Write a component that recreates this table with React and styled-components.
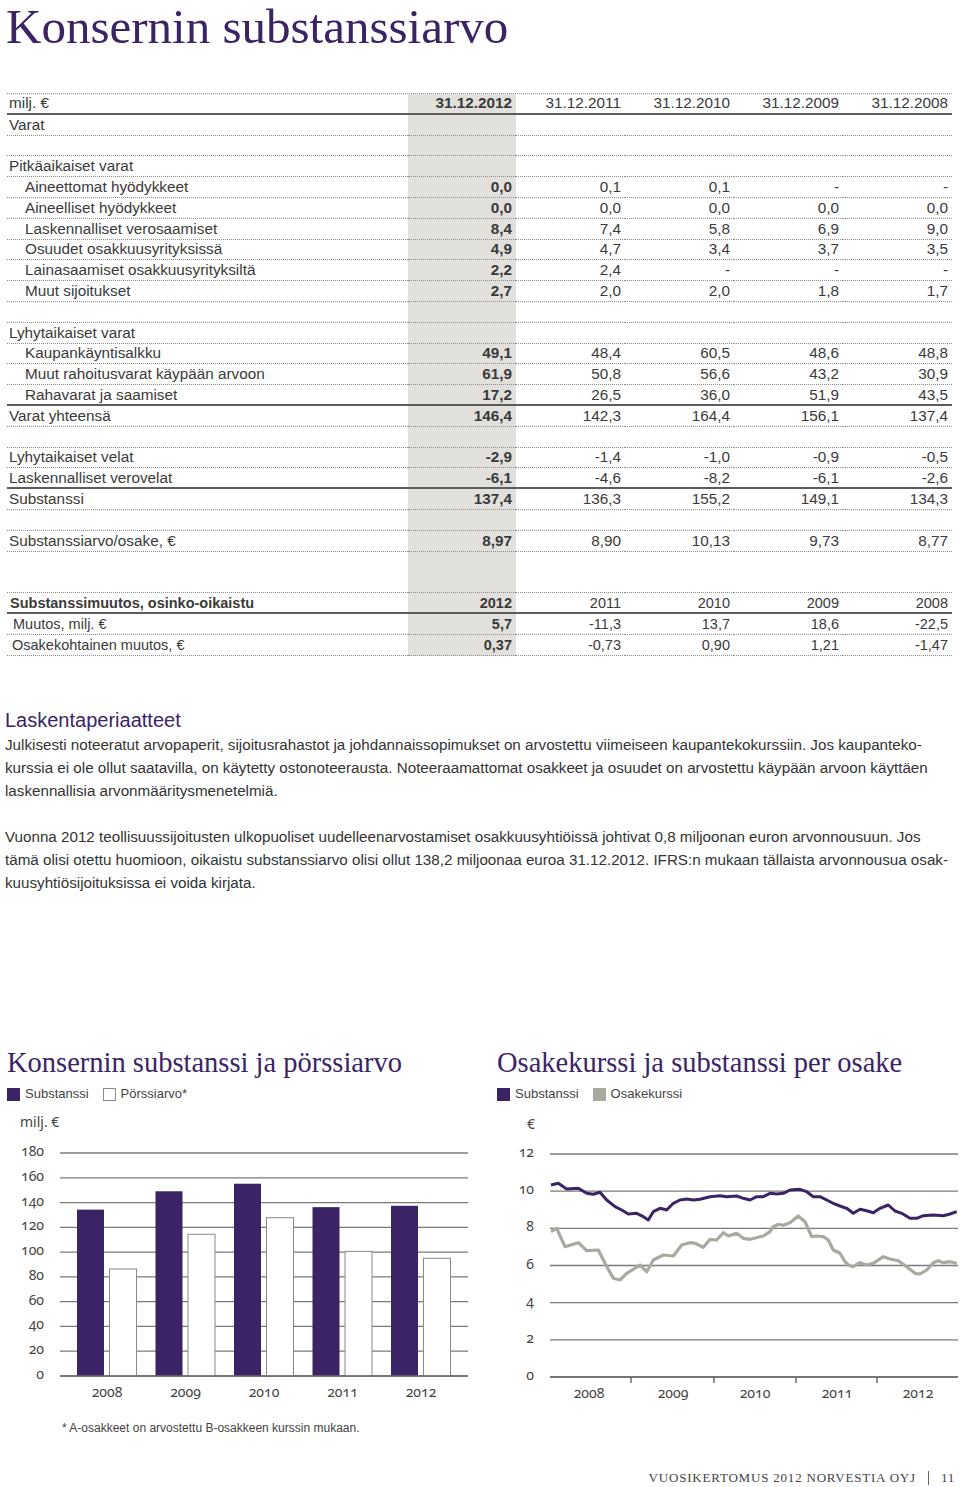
import React from "react";
import styled, { createGlobalStyle } from "styled-components";

const PURPLE = "#3b2466";
const GRAY_COL = "#e1e0dc";
const STOCK = "#a9a9a1";

const GlobalStyle = createGlobalStyle`
  html, body {
    margin: 0;
    padding: 0;
    background: #fff;
  }
  body {
    font-family: "Liberation Sans", Arial, sans-serif;
    color: #333;
  }
`;

const Page = styled.div`
  width: 960px;
  height: 1487px;
  overflow: hidden;
`;

const Title = styled.h1`
  margin: 0;
  padding-left: 6px;
  font-family: "Liberation Serif", "Times New Roman", serif;
  font-weight: normal;
  font-size: 49px;
  line-height: 54px;
  color: ${PURPLE};
`;

const Table = styled.div`
  margin: 39px 0 0 7px;
  width: 945px;
  display: grid;
  grid-template-columns: 401px 108px repeat(4, 109px);
  border-top: 1px dotted #8c8c8c;
  color: #3a3a3a;
`;

const Cell = styled.div`
  height: ${(p) => p.$h || 20.8}px;
  box-sizing: border-box;
  display: flex;
  align-items: center;
  justify-content: ${(p) => (p.$label ? "flex-start" : "flex-end")};
  padding: ${(p) => (p.$label ? `0 0 0 ${p.$pad}px` : "0 4px 0 0")};
  border-bottom: ${(p) =>
    p.$rule === "solid" ? "2px solid #5c5c5c" : "1px dotted #8c8c8c"};
  background: ${(p) => (p.$hl ? GRAY_COL : "transparent")};
  font-size: ${(p) => (p.$small ? 14.5 : 15.3)}px;
  font-weight: ${(p) => (p.$bold ? 700 : 400)};
  white-space: nowrap;
`;

const Section = styled.section`
  margin: 52px 0 0 5px;
`;

const SectionHeading = styled.h2`
  margin: 0;
  font-weight: normal;
  font-size: 20px;
  line-height: 24px;
  color: ${PURPLE};
`;

const Paragraph = styled.p`
  margin: 1.5px 0 0;
  font-size: 15.2px;
  line-height: 23px;
  white-space: nowrap;
  color: #333;

  & + & {
    margin-top: 23px;
  }
`;

const ChartsRow = styled.div`
  display: grid;
  grid-template-columns: 490px 470px;
  margin-top: 152px;
`;

const ChartColumn = styled.div`
  display: flex;
  flex-direction: column;
`;

const ChartTitle = styled.h3`
  margin: 0;
  padding-left: 7px;
  font-family: "Liberation Serif", "Times New Roman", serif;
  font-weight: normal;
  font-size: 28.5px;
  line-height: 34px;
  color: ${PURPLE};
  white-space: nowrap;
`;

const Legend = styled.div`
  display: flex;
  gap: 14px;
  margin-top: 6px;
  padding-left: 7px;
  font-size: 13px;
  line-height: 16px;
  color: #444;
`;

const LegendItem = styled.span`
  display: inline-flex;
  align-items: center;
  gap: 5px;
`;

const Swatch = styled.span`
  width: 13px;
  height: 13px;
  box-sizing: border-box;
  background: ${(p) => p.$color};
  border: ${(p) => (p.$outline ? "1px solid #8a8a8a" : "none")};
`;

const ChartSvg = styled.svg`
  display: block;
  margin-top: 3px;
`;

const AxisText = styled.text`
  font-family: "Noto Sans", "Liberation Sans", sans-serif;
  font-size: 14px;
  fill: #444;
  font-variant-numeric: oldstyle-nums;
`;

const Footnote = styled.div`
  margin-top: 15px;
  padding-left: 62px;
  font-size: 12px;
  line-height: 16px;
  color: #444;
`;

const Footer = styled.footer`
  display: flex;
  justify-content: flex-end;
  align-items: center;
  margin-top: 34px;
  padding-right: 5px;
  font-family: "Liberation Serif", "Times New Roman", serif;
  font-size: 13px;
  line-height: 16px;
  letter-spacing: 0.8px;
  text-transform: uppercase;
  color: #444;
`;

const FooterBar = styled.span`
  width: 1px;
  height: 14px;
  margin: 0 12px;
  background: #666;
`;

const dates = ["31.12.2012", "31.12.2011", "31.12.2010", "31.12.2009", "31.12.2008"];

const rows = [
  { label: "milj. €", values: dates, rule: "solid" },
  { label: "Varat" },
  {},
  { label: "Pitkäaikaiset varat" },
  { label: "Aineettomat hyödykkeet", indent: true, values: ["0,0", "0,1", "0,1", "-", "-"] },
  { label: "Aineelliset hyödykkeet", indent: true, values: ["0,0", "0,0", "0,0", "0,0", "0,0"] },
  { label: "Laskennalliset verosaamiset", indent: true, values: ["8,4", "7,4", "5,8", "6,9", "9,0"] },
  { label: "Osuudet osakkuusyrityksissä", indent: true, values: ["4,9", "4,7", "3,4", "3,7", "3,5"] },
  { label: "Lainasaamiset osakkuusyrityksiltä", indent: true, values: ["2,2", "2,4", "-", "-", "-"] },
  { label: "Muut sijoitukset", indent: true, values: ["2,7", "2,0", "2,0", "1,8", "1,7"] },
  {},
  { label: "Lyhytaikaiset varat" },
  { label: "Kaupankäyntisalkku", indent: true, values: ["49,1", "48,4", "60,5", "48,6", "48,8"] },
  { label: "Muut rahoitusvarat käypään arvoon", indent: true, values: ["61,9", "50,8", "56,6", "43,2", "30,9"] },
  { label: "Rahavarat ja saamiset", indent: true, values: ["17,2", "26,5", "36,0", "51,9", "43,5"], rule: "solid" },
  { label: "Varat yhteensä", values: ["146,4", "142,3", "164,4", "156,1", "137,4"] },
  {},
  { label: "Lyhytaikaiset velat", values: ["-2,9", "-1,4", "-1,0", "-0,9", "-0,5"] },
  { label: "Laskennalliset verovelat", values: ["-6,1", "-4,6", "-8,2", "-6,1", "-2,6"], rule: "solid" },
  { label: "Substanssi", values: ["137,4", "136,3", "155,2", "149,1", "134,3"] },
  {},
  { label: "Substanssiarvo/osake, €", values: ["8,97", "8,90", "10,13", "9,73", "8,77"] },
  { h: 41.6 },
  {
    label: "Substanssimuutos, osinko-oikaistu",
    values: ["2012", "2011", "2010", "2009", "2008"],
    rule: "solid",
    strong: true,
    small: true,
    pad: 3,
  },
  { label: "Muutos, milj. €", values: ["5,7", "-11,3", "13,7", "18,6", "-22,5"], small: true, pad: 6 },
  { label: "Osakekohtainen muutos, €", values: ["0,37", "-0,73", "0,90", "1,21", "-1,47"], small: true, pad: 5 },
];

// bar chart data (milj. €)
const years = ["2008", "2009", "2010", "2011", "2012"];
const substanssi = [134.3, 149.1, 155.2, 136.3, 137.4];
const porssiarvo = [86.4, 114.4, 127.8, 100.6, 95.0];

// line chart points, traced in chart-local pixels
const navLine = [
  [61, 80], [68.3, 78.3], [76.7, 84], [88.3, 83.3], [96.7, 88.3], [103.3, 89.3], [110, 87.3],
  [116.7, 95], [125, 101.7], [131.7, 105], [138.3, 109], [146.7, 108.3], [153.3, 111.7],
  [158.3, 115], [163.3, 106.7], [170, 103.3], [176.7, 105], [183.3, 98.3], [190, 95],
  [196.7, 94], [203.3, 95], [210, 94.3], [220, 91.7], [230, 90.7], [236.7, 91.7], [246.7, 91],
  [253.3, 93.3], [260, 95], [266.7, 91.7], [273.3, 91.7], [280, 88.3], [286.7, 89], [293.3, 88.3],
  [300, 85], [310, 84.3], [316.7, 86.7], [323.3, 91.7], [330, 91.7], [336.7, 95], [343.3, 98.3],
  [350, 101], [356.7, 103.3], [363.3, 108.3], [370, 104.3], [376.7, 105.7], [383.3, 107.7],
  [390, 103.3], [398.3, 100], [405, 106], [411.7, 108.3], [420, 113.3], [426.7, 113.3],
  [433.3, 110.7], [443.3, 110], [453.3, 110.7], [460, 109], [466.7, 106.7],
];

const priceLine = [
  [61, 126.7], [66.7, 123.3], [75, 141.7], [88.3, 137.7], [96.7, 145.7], [108.3, 145],
  [115, 158.3], [123.3, 173.3], [130, 175], [136.7, 168.3], [150, 160], [156.7, 166.7],
  [163.3, 155], [173.3, 150], [183.3, 151], [191.7, 140], [200, 137.7], [205, 138.3],
  [213.3, 142.3], [220, 134.3], [226.7, 135], [233.3, 127.7], [238.3, 131], [246.7, 128.3],
  [253.3, 133.3], [260, 134.3], [273.3, 131], [280, 126.7], [283.3, 121.7], [288.3, 119.3],
  [293.3, 120.3], [300, 117.7], [308.3, 111], [315, 116.7], [321.7, 131.7], [326.7, 131],
  [333.3, 131.7], [338.3, 135], [343.3, 145], [350, 148.3], [355, 156.7], [358.3, 160],
  [363.3, 161.7], [370, 157.7], [376.7, 160], [383.3, 158.3], [393.3, 151.7], [400, 154],
  [408.3, 155.7], [416.7, 161.7], [425, 168.3], [430, 169], [436.7, 165], [443.3, 157.7],
  [448.3, 155.7], [453.3, 157.7], [460, 156.7], [466.7, 158.3],
];

const toPath = (pts) => pts.map(([x, y], i) => `${i ? "L" : "M"}${x} ${y}`).join(" ");

function BarChart() {
  const base = 271;
  const k = 223 / 180;
  const steps = [0, 20, 40, 60, 80, 100, 120, 140, 160, 180];
  return (
    <ChartSvg width="480" height="300" viewBox="0 0 480 300">
      <AxisText x="20" y="22">milj. €</AxisText>
      {steps.map((v) => (
        <g key={v}>
          <line x1="60" x2="468" y1={base - v * k} y2={base - v * k} stroke="#7a7a7a" strokeWidth="1.3" />
          <AxisText x="44" y={base - v * k + 3} textAnchor="end">
            {v}
          </AxisText>
        </g>
      ))}
      {years.map((y, i) => {
        const x = 77 + i * 78.5;
        return (
          <g key={y}>
            <rect x={x} y={base - substanssi[i] * k} width="27" height={substanssi[i] * k} fill={PURPLE} />
            <rect
              x={x + 32.5}
              y={base - porssiarvo[i] * k}
              width="27"
              height={porssiarvo[i] * k}
              fill="#fff"
              stroke="#8a8a8a"
              strokeWidth="1"
            />
            <AxisText x={x + 30} y="292" textAnchor="middle">
              {y}
            </AxisText>
          </g>
        );
      })}
      <line x1="60" x2="468" y1={base} y2={base} stroke="#6a6a6a" strokeWidth="1.5" />
    </ChartSvg>
  );
}

function LineChart() {
  const base = 272;
  const k = 223 / 12;
  const steps = [0, 2, 4, 6, 8, 10, 12];
  const ticks = [141, 224, 306, 387];
  const labels = [99, 183, 265, 347, 428];
  return (
    <ChartSvg width="470" height="300" viewBox="0 0 470 300">
      <AxisText x="37" y="24">€</AxisText>
      {steps.map((v) => (
        <g key={v}>
          <line x1="60" x2="468" y1={base - v * k} y2={base - v * k} stroke="#7a7a7a" strokeWidth="1.3" />
          <AxisText x="44" y={base - v * k + 3} textAnchor="end">
            {v}
          </AxisText>
        </g>
      ))}
      {ticks.map((x) => (
        <line key={x} x1={x} x2={x} y1={base} y2={base + 6} stroke="#6a6a6a" strokeWidth="1.5" />
      ))}
      <line x1="60" x2="468" y1={base} y2={base} stroke="#6a6a6a" strokeWidth="1.5" />
      <path d={toPath(priceLine)} fill="none" stroke={STOCK} strokeWidth="3.2" strokeLinejoin="round" />
      <path d={toPath(navLine)} fill="none" stroke={PURPLE} strokeWidth="3" strokeLinejoin="round" />
      {years.map((y, i) => (
        <AxisText key={y} x={labels[i]} y="293" textAnchor="middle">
          {y}
        </AxisText>
      ))}
    </ChartSvg>
  );
}

export default function App() {
  return (
    <Page>
      <GlobalStyle />
      <Title>Konsernin substanssiarvo</Title>

      <Table>
        {rows.map((r, i) => (
          <React.Fragment key={i}>
            <Cell
              $label
              $pad={r.pad ?? (r.indent ? 18 : 2)}
              $rule={r.rule}
              $h={r.h}
              $bold={r.strong}
              $small={r.small}
            >
              {r.label}
            </Cell>
            {[0, 1, 2, 3, 4].map((c) => (
              <Cell key={c} $hl={c === 0} $bold={c === 0} $rule={r.rule} $h={r.h} $small={r.small}>
                {r.values ? r.values[c] : ""}
              </Cell>
            ))}
          </React.Fragment>
        ))}
      </Table>

      <Section>
        <SectionHeading>Laskentaperiaatteet</SectionHeading>
        <Paragraph>
          Julkisesti noteeratut arvopaperit, sijoitusrahastot ja johdannaissopimukset on arvostettu viimeiseen
          kaupantekokurssiin. Jos kaupanteko-
          <br />
          kurssia ei ole ollut saatavilla, on käytetty ostonoteerausta. Noteeraamattomat osakkeet ja osuudet on
          arvostettu käypään arvoon käyttäen
          <br />
          laskennallisia arvonmääritysmenetelmiä.
        </Paragraph>
        <Paragraph>
          Vuonna 2012 teollisuussijoitusten ulkopuoliset uudelleenarvostamiset osakkuusyhtiöissä johtivat 0,8
          miljoonan euron arvonnousuun. Jos
          <br />
          tämä olisi otettu huomioon, oikaistu substanssiarvo olisi ollut 138,2 miljoonaa euroa 31.12.2012. IFRS:n
          mukaan tällaista arvonnousua osak-
          <br />
          kuusyhtiösijoituksissa ei voida kirjata.
        </Paragraph>
      </Section>

      <ChartsRow>
        <ChartColumn>
          <ChartTitle>Konsernin substanssi ja pörssiarvo</ChartTitle>
          <Legend>
            <LegendItem>
              <Swatch $color={PURPLE} />
              Substanssi
            </LegendItem>
            <LegendItem>
              <Swatch $color="#fff" $outline />
              Pörssiarvo*
            </LegendItem>
          </Legend>
          <BarChart />
          <Footnote>* A-osakkeet on arvostettu B-osakkeen kurssin mukaan.</Footnote>
        </ChartColumn>
        <ChartColumn>
          <ChartTitle>Osakekurssi ja substanssi per osake</ChartTitle>
          <Legend>
            <LegendItem>
              <Swatch $color={PURPLE} />
              Substanssi
            </LegendItem>
            <LegendItem>
              <Swatch $color={STOCK} />
              Osakekurssi
            </LegendItem>
          </Legend>
          <LineChart />
        </ChartColumn>
      </ChartsRow>

      <Footer>
        <span>Vuosikertomus 2012 Norvestia Oyj</span>
        <FooterBar />
        <span>11</span>
      </Footer>
    </Page>
  );
}
